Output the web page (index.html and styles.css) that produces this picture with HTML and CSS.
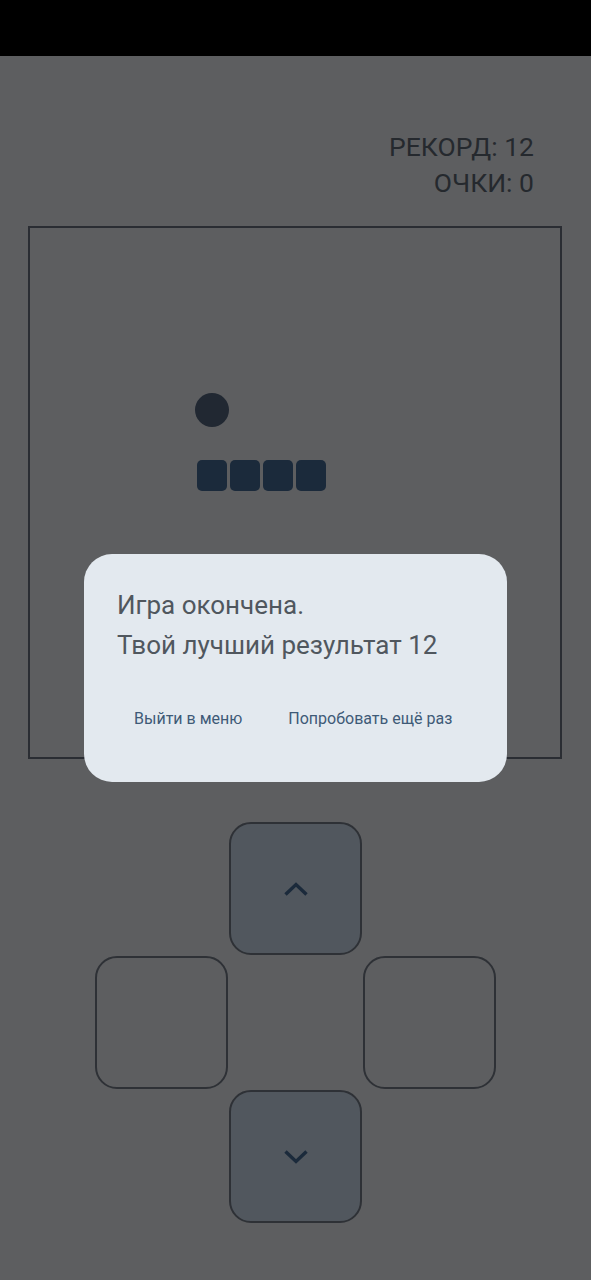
FILE: index.html
```html
<!DOCTYPE html>
<html lang="ru">
<head>
    <meta charset="UTF-8">
    <meta name="viewport" content="width=device-width, initial-scale=1.0">
    <link rel="stylesheet" href="styles.css">
    <title>Змейка</title>
</head>
<body>
    <div class="status-bar"></div>

    <main class="game">
        <div class="score">
            <div>РЕКОРД: 12</div>
            <div>ОЧКИ: 0</div>
        </div>

        <div class="board">
            <div class="food" style="grid-column: 6; grid-row: 6;"></div>
            <div class="segment" style="grid-column: 6; grid-row: 8;"></div>
            <div class="segment" style="grid-column: 7; grid-row: 8;"></div>
            <div class="segment" style="grid-column: 8; grid-row: 8;"></div>
            <div class="segment" style="grid-column: 9; grid-row: 8;"></div>
        </div>

        <div class="pad">
            <button class="key key-up">
                <svg width="24" height="14" viewBox="0 0 24 14">
                    <polyline points="1.5,12.5 12,2.5 22.5,12.5" />
                </svg>
            </button>
            <button class="key key-left"></button>
            <button class="key key-right"></button>
            <button class="key key-down">
                <svg width="24" height="14" viewBox="0 0 24 14">
                    <polyline points="1.5,1.5 12,11.5 22.5,1.5" />
                </svg>
            </button>
        </div>
    </main>

    <div class="overlay">
        <div class="dialog">
            <p class="dialog-text">Игра окончена.<br>Твой лучший результат 12</p>
            <div class="dialog-actions">
                <button class="text-btn">Выйти в меню</button>
                <button class="text-btn">Попробовать ещё раз</button>
            </div>
        </div>
    </div>
</body>
</html>
```

FILE: styles.css
```css
body {
    font-family: Roboto, 'Noto Sans', sans-serif;
    background-color: #5d5e60;
    margin: 0;
    height: 1280px;
    overflow: hidden;
}

.status-bar {
    height: 56px;
    background-color: #000;
}

.score {
    margin-top: 73px;
    padding-right: 57px;
    text-align: right;
    font-size: 26.5px;
    line-height: 36px;
    color: #25292e;
}

.board {
    box-sizing: border-box;
    width: 534px;
    height: 533px;
    margin: 25px 0 0 28px;
    border: 2px solid #2a2d33;
    display: grid;
    grid-template-columns: repeat(16, 33px);
    grid-template-rows: repeat(16, 33px);
}

.food {
    width: 34px;
    height: 34px;
    border-radius: 50%;
    background-color: #212832;
}

.segment {
    width: 30px;
    height: 31px;
    margin: 1px 0 0 2px;
    border-radius: 5px;
    background-color: #1b2a3b;
}

.pad {
    width: 401px;
    margin: 63px auto 0;
    display: grid;
    grid-template-columns: repeat(3, 133px);
    grid-template-rows: repeat(3, 133px);
    gap: 1px;
}

.key {
    box-sizing: border-box;
    border: 2px solid #2e3136;
    border-radius: 22px;
    background-color: transparent;
    display: flex;
    align-items: center;
    justify-content: center;
    padding: 0;
}

.key svg polyline {
    fill: none;
    stroke: #1b2a3b;
    stroke-width: 3.4;
}

.key-up {
    grid-column: 2;
    grid-row: 1;
    background-color: #51575e;
}

.key-left {
    grid-column: 1;
    grid-row: 2;
}

.key-right {
    grid-column: 3;
    grid-row: 2;
}

.key-down {
    grid-column: 2;
    grid-row: 3;
    background-color: #51575e;
}

.overlay {
    position: fixed;
    top: 56px;
    left: 0;
    right: 0;
    bottom: 0;
    display: flex;
    align-items: center;
    justify-content: center;
}

.dialog {
    box-sizing: border-box;
    width: 423px;
    height: 228px;
    padding: 31px 0 0 33px;
    border-radius: 28px;
    background-color: #e3e9ef;
}

.dialog-text {
    margin: 0;
    font-size: 26px;
    line-height: 40px;
    color: #50575e;
}

.dialog-actions {
    display: flex;
    gap: 22px;
    margin-top: 33px;
    padding-left: 5px;
}

.text-btn {
    font-family: Roboto, 'Noto Sans', sans-serif;
    font-size: 16px;
    height: 40px;
    padding: 0 12px;
    border: none;
    background: none;
    color: #3e5a77;
}
```
